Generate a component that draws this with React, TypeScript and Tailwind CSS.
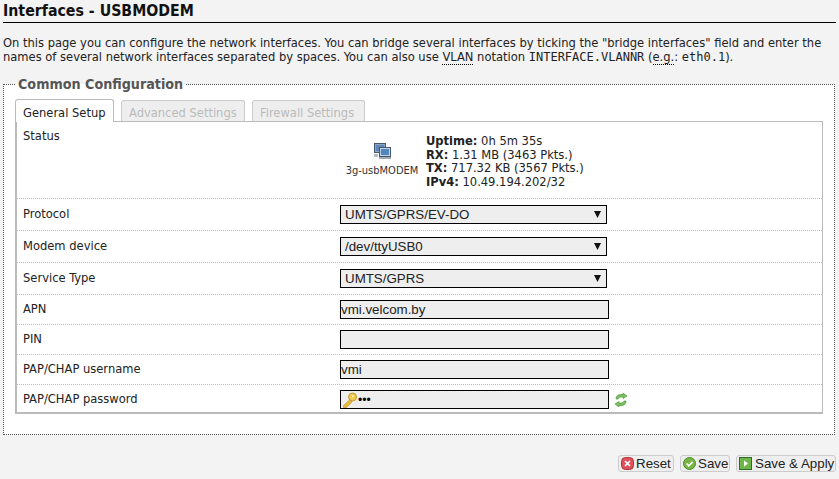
import React from "react";

const Row = ({ label, children }: { label: string; children: React.ReactNode }) => (
  <div className="flex h-[30px] border-b border-dotted border-[#bbb] items-start">
    <div className="w-[323px] pl-[6px] pt-[6px] text-[#222] leading-[15px]">{label}</div>
    <div className="pt-[5px] flex items-center">{children}</div>
  </div>
);

const Select = ({ value }: { value: string }) => (
  <div className="relative w-[267px] h-[19px]">
    <select
      defaultValue={value}
      className="appearance-none w-full h-full border border-black bg-[#eee] pl-[4px] text-[13.33px] text-[#222] font-['Liberation_Sans',sans-serif] leading-[17px] outline-none"
    >
      <option>{value}</option>
    </select>
    <svg className="absolute right-[6px] top-[6px]" width="7" height="7" viewBox="0 0 7 7">
      <path d="M0 0h7L3.5 7z" fill="#111" />
    </svg>
  </div>
);

const Input = ({ value }: { value: string }) => (
  <input
    readOnly
    value={value}
    className="block w-[269px] h-[19px] border border-black bg-[#eee] px-0 text-[13.33px] text-[#222] font-['Liberation_Sans',sans-serif] outline-none"
  />
);

const Tab = ({ label, active, w }: { label: string; active?: boolean; w: string }) => (
  <div
    className={
      active
        ? `${w} h-[23px] -mb-px pl-[7px] pt-[5px] border border-b-0 border-[#bbb] rounded-t-[3px] bg-white text-[#222] leading-[15px] z-10 whitespace-nowrap`
        : `${w} h-[21px] pl-[7px] pt-[4px] border border-b-0 border-[#ccc] rounded-t-[3px] bg-[#eee] text-[#bbb] font-normal leading-[15px] whitespace-nowrap`
    }
  >
    {label}
  </div>
);

const NetIcon = () => (
  <svg width="18" height="16" viewBox="0 0 18 16">
    <rect x="1.500" y=".5" width="11" height="9" fill="#8ea4bf" stroke="#44566e" />
    <rect x="3" y="2" width="8" height="6" fill="#5f87b8" />
    <rect x="6.500" y="4.500" width="11" height="9" fill="#c5d2e0" stroke="#44566e" />
    <rect x="8" y="6" width="8" height="6" fill="#4e86bd" />
    <rect x="1" y="11" width="4" height="3" fill="#b3bcc6" />
    <rect x="6" y="14" width="12" height="2" fill="#a0a8b2" />
  </svg>
);

const KeyIcon = () => (
  <svg width="16" height="16" viewBox="0 0 16 16" className="absolute left-[2px] top-[2px]">
    <circle cx="10.5" cy="5" r="4" fill="#f0c850" stroke="#c09a38" />
    <circle cx="11" cy="4.2" r="1" fill="#fff4c0" />
    <path d="M8 7.5L1.5 13.5v2h3l1-1v-1h1.2l.8-1v-1h1.2l1.3-1.5z" fill="#e5b93e" stroke="#c09a38" strokeWidth=".7" />
  </svg>
);

const RefreshIcon = () => (
  <svg width="12" height="14" viewBox="0 0 12 14">
    <path d="M1 6C1 3 3 1.500 6 1.500L8 1.500V0L12 3L8 5.500V4H6C4.500 4 3.500 5 3 6z" fill="#7cc35f" stroke="#3f8a30" strokeWidth=".6" />
    <path d="M11 8C11 11 9 12.500 6 12.500H4V14L0 11L4 8.500V10H6C7.500 10 8.500 9 9 8z" fill="#7cc35f" stroke="#3f8a30" strokeWidth=".6" />
  </svg>
);

const ResetIcon = () => (
  <svg width="13" height="13" viewBox="0 0 13 13">
    <rect x=".5" y=".5" width="12" height="12" rx="4" fill="#e0505a" stroke="#a83a40" />
    <path d="M4 4l5 5M9 4l-5 5" stroke="#fff" strokeWidth="1.700" />
  </svg>
);

const SaveIcon = () => (
  <svg width="13" height="13" viewBox="0 0 13 13">
    <circle cx="6.500" cy="6.500" r="6" fill="#76b544" stroke="#4c8a2c" />
    <path d="M3.500 6.500l2.200 2.300 4-4" stroke="#fff" strokeWidth="1.800" fill="none" />
  </svg>
);

const ApplyIcon = () => (
  <svg width="13" height="13" viewBox="0 0 13 13">
    <rect x=".5" y=".5" width="12" height="12" fill="#6fb54a" stroke="#2f6a26" />
    <path d="M5 3.500l4 3-4 3z" fill="#fff" />
  </svg>
);

const Btn = ({ icon, label, w, gap }: { icon: React.ReactNode; label: string; w: string; gap: string }) => (
  <button
    className={`${w} ${gap} h-[17px] flex items-center pl-[2px] whitespace-nowrap border border-[#ccc] rounded-[3px] bg-[#eee] text-[13.33px] text-[#222] font-['Liberation_Sans',sans-serif] leading-[15px]`}
  >
    {icon}
    {label}
  </button>
);

export default function App() {
  return (
    <div className="w-[839px] h-[479px] overflow-hidden bg-[#f3f3f3] text-[12.8px] text-[#222] font-['DejaVu_Sans_Condensed','DejaVu_Sans',sans-serif]">
      <h2 className="mx-[3px] h-[23px] border-b border-black pt-[1px] text-[15.75px] leading-[20px] font-bold text-[#111] w-[833px]">
        Interfaces - USBMODEM
      </h2>
      <p className="mx-[3px] mt-[13px] w-[830px] leading-[14px]">
        On this page you can configure the network interfaces. You can bridge several interfaces by ticking the "bridge interfaces" field and enter the names of several network interfaces separated by spaces. You can also use{" "}
        <abbr className="no-underline border-b border-dotted border-black">VLAN</abbr> notation{" "}
        <code className="font-['DejaVu_Sans_Mono',monospace] text-[12px]">INTERFACE.VLANNR</code> (
        <abbr className="no-underline border-b border-dotted border-black">e.g.</abbr>:{" "}
        <code className="font-['DejaVu_Sans_Mono',monospace] text-[12px]">eth0.1</code>).
      </p>
      <fieldset className="mx-[3px] mt-[12px] w-[829px] h-[359px] border border-dotted border-[#555] bg-white px-[11px]">
        <legend className="ml-[0px] px-[3px] text-[14.2px] leading-[16px] font-bold text-[#555]">Common Configuration</legend>
        <div className="flex items-end gap-[7px] mt-[7px] h-[22px]">
          <Tab label="General Setup" active w="w-[99px]" />
          <Tab label="Advanced Settings" w="w-[124px]" />
          <Tab label="Firewall Settings" w="w-[113px]" />
        </div>
        <div className="w-[808px] h-[293px] border border-[#bbb] border-b-2 border-l-2">
          <div className="flex h-[77px] border-b border-dotted border-[#bbb]">
            <div className="w-[323px] pl-[6px] pt-[6px] leading-[15px]">Status</div>
            <div className="flex items-start pt-[12px]">
              <div className="w-[84px] flex flex-col items-center pt-[9px] text-[11px] leading-[13px] text-[#333]">
                <NetIcon />
                <span className="mt-[5px]">3g-usbMODEM</span>
              </div>
              <div className="ml-[2px] leading-[13.7px] text-[#222]">
                <div><b>Uptime:</b> 0h 5m 35s</div>
                <div><b>RX:</b> 1.31 MB (3463 Pkts.)</div>
                <div><b>TX:</b> 717.32 KB (3567 Pkts.)</div>
                <div><b>IPv4:</b> 10.49.194.202/32</div>
              </div>
            </div>
          </div>
          <div className="[&>div:nth-child(-n+3)]:h-[32px] [&>div:nth-child(-n+3)]:pt-[1px]">
            <Row label="Protocol"><Select value="UMTS/GPRS/EV-DO" /></Row>
            <Row label="Modem device"><Select value="/dev/ttyUSB0" /></Row>
            <Row label="Service Type"><Select value="UMTS/GPRS" /></Row>
            <Row label="APN"><Input value="vmi.velcom.by" /></Row>
            <Row label="PIN"><Input value="" /></Row>
            <Row label="PAP/CHAP username"><Input value="vmi" /></Row>
            <div className="flex h-[29px] items-start">
              <div className="w-[323px] pl-[6px] pt-[6px] leading-[15px]">PAP/CHAP password</div>
              <div className="pt-[5px] flex items-center gap-[6px]">
                <div className="relative">
                  <input
                    readOnly
                    type="password"
                    value="vmi"
                    className="block w-[269px] h-[19px] border border-black bg-[#eee] pl-[17px] text-[12px] text-black font-['Liberation_Sans',sans-serif] outline-none"
                  />
                  <KeyIcon />
                </div>
                <RefreshIcon />
              </div>
            </div>
          </div>
        </div>
      </fieldset>
      <div className="flex justify-end gap-[6px] mt-[20px] pr-[3px]">
        <Btn icon={<ResetIcon />} label="Reset" w="w-[56px]" gap="gap-[2px]" />
        <Btn icon={<SaveIcon />} label="Save" w="w-[50px]" gap="gap-[2px]" />
        <Btn icon={<ApplyIcon />} label="Save & Apply" w="w-[100px]" gap="gap-[3px]" />
      </div>
    </div>
  );
}
